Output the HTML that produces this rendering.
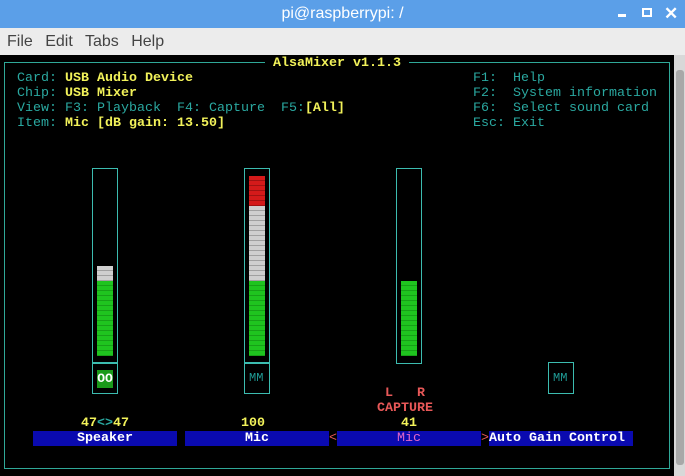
<!DOCTYPE html>
<html><head><style>
*{margin:0;padding:0;box-sizing:border-box}
body{width:685px;height:476px;overflow:hidden;background:#000;position:relative;font-family:"Liberation Mono",monospace;}
.t{position:absolute;font-size:13.33px;line-height:15px;white-space:pre;color:#2aa8a0}
.y{color:#f2f25a;font-weight:bold}
.r{color:#e85858;font-weight:bold}
.a{position:absolute}
.fr{position:absolute;border:1.5px solid #3cbcb0}
.g{background:repeating-linear-gradient(#1fc41f 0 4px,#17a017 4px 5px)}
.w{background:repeating-linear-gradient(#cfcfcf 0 4px,#a0a0a0 4px 5px)}
.rd{background:repeating-linear-gradient(#d41a1a 0 4px,#a01212 4px 5px)}
.bb{position:absolute;top:431px;height:15px;background:#0a0ab0;color:#fff;font-weight:bold;font-size:13.33px;line-height:15px;text-align:center;white-space:pre}
</style></head><body>
<div class="a" style="left:0;top:0;width:685px;height:28px;background:#5b9fe8;color:#fff;font-family:'Liberation Sans',sans-serif;font-size:16px;line-height:27px;text-align:center;">pi@raspberrypi: /</div>
<div class="a" style="left:618px;top:14px;width:8px;height:3px;background:#fff"></div>
<div class="a" style="left:642px;top:8px;width:10px;height:9px;border:2px solid #fff"></div>
<div class="a" style="left:664px;top:2px;color:#fff;font-family:'Liberation Sans',sans-serif;font-size:17px;font-weight:bold;line-height:24px">✕</div>
<div class="a" style="left:0;top:28px;width:685px;height:27px;background:#ececec;color:#444;font-family:'Liberation Sans',sans-serif;font-size:16px;line-height:27px;padding-left:7px;word-spacing:8px">File Edit Tabs Help</div>
<div class="a" style="left:674px;top:55px;width:11px;height:421px;background:#d8d8d8"></div>
<div class="a" style="left:676px;top:70px;width:8px;height:395px;background:#a8a8a8;border-radius:3px"></div>
<div class="a" style="left:4px;top:62px;width:666px;height:407px;border:1.5px solid #2fa898"></div>
<div class="t y" style="left:265px;top:56px;background:#000;padding:0 8px">AlsaMixer v1.1.3</div>
<div class="t" style="left:17px;top:71px">Card: <span class="y">USB Audio Device</span>
Chip: <span class="y">USB Mixer</span>
View: F3: Playback  F4: Capture  F5:<span class="y">[All]</span>
Item: <span class="y">Mic [dB gain: 13.50]</span></div>
<div class="t" style="left:473px;top:71px">F1:  Help
F2:  System information
F6:  Select sound card
Esc: Exit</div>
<!-- speaker -->
<div class="fr" style="left:92px;top:168px;width:26px;height:196px"></div>
<div class="fr" style="left:92px;top:362px;width:26px;height:32px"></div>
<div class="a w" style="left:97px;top:266px;width:16px;height:15px"></div>
<div class="a g" style="left:97px;top:281px;width:16px;height:75px"></div>
<div class="a" style="left:97px;top:370px;width:16px;height:18px;background:#1a9a1a;color:#fff;font-weight:bold;font-size:13px;line-height:18px;text-align:center">OO</div>
<!-- mic -->
<div class="fr" style="left:244px;top:168px;width:26px;height:196px"></div>
<div class="fr" style="left:244px;top:362px;width:26px;height:32px"></div>
<div class="a rd" style="left:249px;top:176px;width:16px;height:30px"></div>
<div class="a w" style="left:249px;top:206px;width:16px;height:75px"></div>
<div class="a g" style="left:249px;top:281px;width:16px;height:75px"></div>
<div class="t" style="left:249px;top:371px;font-size:12px;color:#1f9a94">MM</div>
<!-- capture -->
<div class="fr" style="left:396px;top:168px;width:26px;height:196px"></div>
<div class="a g" style="left:401px;top:281px;width:16px;height:75px"></div>
<!-- agc -->
<div class="fr" style="left:548px;top:362px;width:26px;height:32px"></div>
<div class="t" style="left:553px;top:371px;font-size:12px;color:#1f9a94">MM</div>
<div class="t r" style="left:385px;top:386px">L   R</div>
<div class="t r" style="left:377px;top:401px">CAPTURE</div>
<div class="t y" style="left:81px;top:416px">47<span style="color:#2aa8a0">&lt;&gt;</span>47</div>
<div class="t y" style="left:241px;top:416px">100</div>
<div class="t y" style="left:401px;top:416px">41</div>
<div class="bb" style="left:33px;width:144px">Speaker</div>
<div class="bb" style="left:185px;width:144px">Mic</div>
<div class="t r" style="left:329px;top:431px;font-weight:normal">&lt;</div>
<div class="bb" style="left:337px;width:144px;color:#e066c8;font-weight:normal">Mic</div>
<div class="t r" style="left:481px;top:431px;font-weight:normal">&gt;</div>
<div class="bb" style="left:489px;width:144px;text-align:left">Auto Gain Control</div>
</body></html>
